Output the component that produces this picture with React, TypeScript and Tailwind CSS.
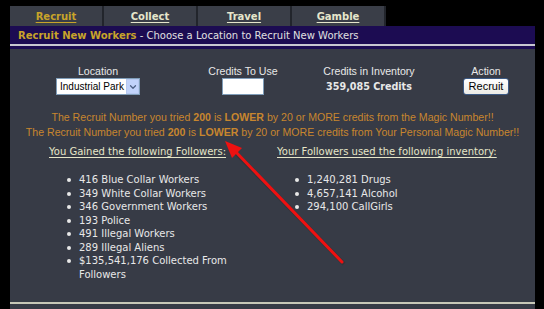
import { ChevronDown } from 'lucide-react';

const tabs = ['Recruit', 'Collect', 'Travel', 'Gamble'];

const followers = [
  '416 Blue Collar Workers',
  '349 White Collar Workers',
  '346 Government Workers',
  '193 Police',
  '491 Illegal Workers',
  '289 Illegal Aliens',
  '$135,541,176 Collected From Followers',
];

const inventory = ['1,240,281 Drugs', '4,657,141 Alcohol', '294,100 CallGirls'];

function ResultList({ title, items }: { title: string; items: string[] }) {
  return (
    <div className="flex flex-col">
      <div className="h-[24px] leading-[24px] text-[#e6e6c8] underline underline-offset-2">{title}</div>
      <ul className="mt-[9px] ml-[18px] w-[162px]">
        {items.map((item) => (
          <li key={item} className="flex leading-[13.5px] text-[#e8e8e8]">
            <span className="w-[12px] shrink-0 flex items-start pt-[5px]">
              <span className="w-[4px] h-[4px] rounded-full bg-[#e8e8e8]" />
            </span>
            <span>{item}</span>
          </li>
        ))}
      </ul>
    </div>
  );
}

export default function App() {
  return (
    <div className="relative w-[544px] h-[309px] overflow-hidden bg-black font-['DejaVu_Sans',sans-serif] text-[10px]">
      <div className="ml-[10px] w-[525px]">
        {/* Tabs */}
        <div className="flex pt-[6px]">
          {tabs.map((t, i) => (
            <div
              key={t}
              className="w-[94px] h-[20px] flex items-center justify-center bg-[#3a3e48] border-r-2 border-[#22252c] font-bold text-[10px]"
            >
              <span className={`underline underline-offset-2 ${i === 0 ? 'text-[#c8a42a]' : 'text-[#e6e6cc]'}`}>{t}</span>
            </div>
          ))}
        </div>

        {/* Title bar */}
        <div className="h-[18px] bg-[#1c0c52] flex items-center pl-[8px] text-[10px]">
          <span className="text-[#c8a42a] font-bold">Recruit New Workers</span>
          <span className="text-[#e0e0e0]">&nbsp;- Choose a Location to Recruit New Workers</span>
        </div>
        <div className="h-[2px] bg-[#c8c8d0]" />
        <div className="h-[3px] bg-[#1c0c52]" />

        {/* Panel */}
        <div className="h-[253px] bg-[#373b46] pt-[15px] font-['Liberation_Sans',sans-serif] text-[10.6px]">
          <div className="grid grid-cols-[176px_114px_138px_96px] text-[#e8e8e8]">
            <div className="flex flex-col items-center">
              <div className="h-[14px] leading-[14px]">Location</div>
              <div className="w-[84px] h-[17px] bg-white border border-[#7f9db9] flex items-center pl-[3px] text-black text-[10px] whitespace-nowrap overflow-hidden">
                <span className="flex-1">Industrial Park</span>
                <span className="w-[13px] h-[15px] shrink-0 bg-[#c1d3fb] border border-[#b7c9f0] flex items-center justify-center">
                  <ChevronDown size={10} strokeWidth={3} color="#4d6185" />
                </span>
              </div>
            </div>
            <div className="flex flex-col items-center">
              <div className="h-[14px] leading-[14px]">Credits To Use</div>
              <div className="w-[42px] h-[17px] bg-white border border-[#7f9db9]" />
            </div>
            <div className="flex flex-col items-center">
              <div className="h-[14px] leading-[14px]">Credits in Inventory</div>
              <div className="h-[17px] leading-[17px] font-bold font-['DejaVu_Sans',sans-serif] text-[9.6px]">359,085 Credits</div>
            </div>
            <div className="flex flex-col items-center">
              <div className="h-[14px] leading-[14px]">Action</div>
              <div className="w-[46px] h-[17px] bg-gradient-to-b from-white to-[#ecebe6] border border-[#3c5a86] rounded-[3px] flex items-center justify-center text-black text-[11px]">
                Recruit
              </div>
            </div>
          </div>

          <div className="mt-[15px] flex flex-col items-center text-[#c8862e] leading-[15px]">
            <div>
              The Recruit Number you tried <b>200</b> is <b>LOWER</b> by 20 or MORE credits from the Magic Number!!
            </div>
            <div>
              The Recruit Number you tried <b>200</b> is <b>LOWER</b> by 20 or MORE credits from Your Personal Magic Number!!
            </div>
          </div>

          <div className="flex font-['DejaVu_Sans',sans-serif] text-[10px]">
            <div className="w-[267px] pl-[39px]">
              <ResultList title="You Gained the following Followers:" items={followers} />
            </div>
            <div>
              <ResultList title="Your Followers used the following inventory:" items={inventory} />
            </div>
          </div>
        </div>
        <div className="h-[2px] bg-[#c8c8b8]" />
        <div className="h-[10px] bg-[#373b46]" />
      </div>

      {/* Annotation arrow */}
      <svg className="absolute left-0 top-0 pointer-events-none" width="544" height="309">
        <line x1="343" y1="263" x2="234" y2="151" stroke="#2a2a2a" strokeOpacity="0.4" strokeWidth="4" transform="translate(1,1)" />
        <line x1="342" y1="262" x2="234" y2="150" stroke="#ee1111" strokeWidth="3" strokeLinecap="round" />
        <polygon points="225,141 242,148 232,158" fill="#ee1111" />
      </svg>
    </div>
  );
}
